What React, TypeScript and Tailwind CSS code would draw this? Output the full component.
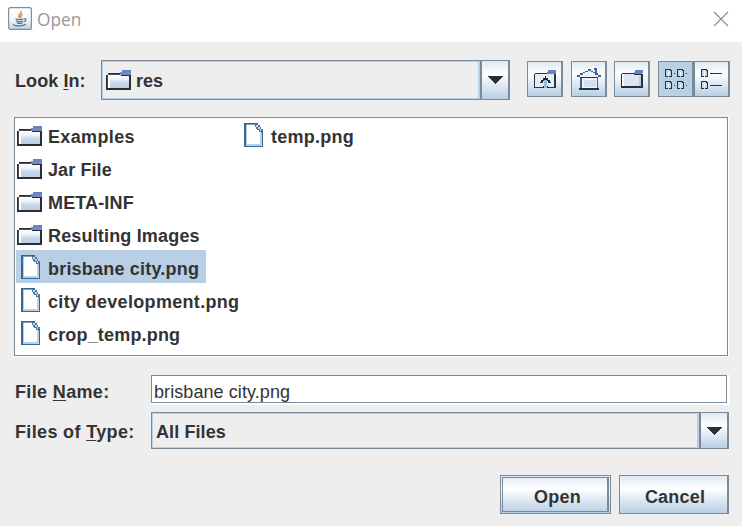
import React from "react";

const face = "bg-linear-to-b from-[#dfe9f3] via-white via-35% to-[#b8cfe5]";

function Folder() {
  return (
    <svg width="26" height="20" viewBox="0 0 26 20" shapeRendering="crispEdges" className="shrink-0">
      <defs>
        <linearGradient id="folderFill" x1="0" y1="0" x2="0" y2="1">
          <stop offset="0" stopColor="#ffffff" />
          <stop offset="0.35" stopColor="#f1f5fa" />
          <stop offset="0.6" stopColor="#c8daeb" />
          <stop offset="1" stopColor="#b8cfe5" />
        </linearGradient>
      </defs>
      <path d="M2 4H25V18H2Z" fill="url(#folderFill)" />
      <path d="M2 5H4V18H2Z" fill="#fff" />
      <path d="M2 3H15V4H2Z M0 5H1V20H0Z M0 18H25V20H0Z M23 5H25V20H23Z" fill="#2b2d33" />
      <path d="M2 4H15V5H2Z M1 5H2V18H1Z" fill="#4a4e57" />
      <path d="M16 0H25V3H16Z" fill="#6382bf" />
      <path d="M14 2H25V5H14Z" fill="#7189c0" />
      <path d="M15 5H23V6H15Z" fill="#2b2d33" />
    </svg>
  );
}

function Document() {
  return (
    <svg width="20" height="24" viewBox="0 0 20 24" shapeRendering="crispEdges" className="shrink-0">
      <path d="M1 1H12V4L15 7H18V23H1Z" fill="#fff" />
      <path d="M2 21H17V23H2Z M16 10H18V22H16Z M2 2H3V22H2Z" fill="#b8cfe5" />
      <path d="M0 0H14V1H0Z M0 0H2V24H0Z M0 23H19V24H0Z M18 8H19V24H18Z" fill="#366596" />
      <path d="M2 1H11V2H2Z" fill="#7f9fbe" />
      <path d="M11 1H14V2H16V4H17V6H19V10H17V9H15V7H13V6H12V4H11Z" fill="#4a779f" />
      <path d="M12 2H14V4H12Z M14 4H16V6H14Z M16 6H17V8H16Z" fill="#c3d9ec" />
    </svg>
  );
}

function Java() {
  return (
    <svg width="24" height="23" viewBox="0 0 24 23" fill="none" className="shrink-0">
      <defs>
        <linearGradient id="javaFill" x1="0" y1="0" x2="0" y2="1">
          <stop offset="0" stopColor="#fff" />
          <stop offset="0.55" stopColor="#f4f6f8" />
          <stop offset="1" stopColor="#c5d1dc" />
        </linearGradient>
      </defs>
      <rect x="0.6" y="0.6" width="22.8" height="21.8" rx="2" fill="url(#javaFill)" stroke="#7890a5" strokeWidth="1.2" />
      <path d="M13 4C14 7 8.8 7.2 11.6 11M14.5 7C11.7 8.2 13.7 9.3 12.3 11" stroke="#e38337" strokeWidth="1.4" />
      <path d="M7.5 12C8.5 13 14 12.7 15 12M8 14C10 15 13.5 14.7 15 14M9 16C11 16.8 13 16.5 14.5 16M15.5 12C19 11 18.5 14 15.5 15M5 17.3C7 19.5 15 19.2 18 17.3" stroke="#47799f" strokeWidth="1.2" />
    </svg>
  );
}

function UpFolder() {
  return (
    <svg width="22" height="18" viewBox="0 0 22 18" shapeRendering="crispEdges">
      <path d="M1 4H21V17H1Z" fill="#e6eef6" />
      <path d="M1 3H13V4H1Z M0 4H1V18H0Z M20 4H22V18H20Z M0 17H9V18H0Z M14 17H22V18H14Z" fill="#26354a" />
      <path d="M14 0H22V4H13V2H14Z" fill="#6382bf" />
      <path d="M10 9H13V18H10Z" fill="#9db9dc" />
      <path d="M11 6H12V8H14V10H16V12H17V13H14V11H13V16H14V18H13V10H10V18H9V16H10V11H9V13H6V12H7V10H9V8H11Z" fill="#202937" />
    </svg>
  );
}

function Home() {
  return (
    <svg width="24" height="22" viewBox="0 0 24 22" shapeRendering="crispEdges">
      <path d="M12 1L23 8H20V20H4V8H1Z" fill="#edf3f9" />
      <path
        d="M11 1H14V3H11Z M8 3H11V4H8Z M14 3H16V4H14Z M6 4H8V5H6Z M16 4H18V5H16Z M3 5H6V7H3Z M18 5H21V7H18Z M0 7H3V9H0Z M21 7H24V9H21Z M17 0H20V5H18V2H17Z M3 9H5V21H3Z M20 9H21V21H20Z"
        fill="#366596"
      />
      <path d="M3 9H21V10H3Z M2 20H22V22H2Z" fill="#1f334b" />
      <path d="M7 12H19V19H7Z" fill="#d5e0ec" />
    </svg>
  );
}

function NewFolder() {
  return (
    <svg width="22" height="18" viewBox="0 0 22 18" shapeRendering="crispEdges">
      <path d="M1 4H21V16H1Z" fill="#dce7f2" />
      <path d="M1 4H3V16H1Z" fill="#fff" />
      <path d="M18 6H20V16H18Z" fill="#b8cfe5" />
      <path d="M1 3H13V4H1Z M0 4H1V18H0Z M20 4H22V18H20Z M0 16H22V18H0Z M13 4H21V5H13Z" fill="#26303f" />
      <path d="M14 0H22V3H21V4H13V2H14Z" fill="#6382bf" />
    </svg>
  );
}

function Grid() {
  return (
    <svg width="22" height="20" viewBox="0 0 22 20" shapeRendering="crispEdges">
      {[0, 12].map((y) =>
        [0, 12].map((x) => (
          <g key={`${x}-${y}`} transform={`translate(${x} ${y})`}>
            <path d="M1 1H6V7H1Z" fill="#c3d6e9" />
            <path d="M0 0H6V1H1V7H3V8H0Z M5 1H7V8H4V7H6V2H5Z M9 4H10V5H9Z" fill="#263449" />
            <path d="M3 3H4V6H3Z" fill="#fff" />
          </g>
        ))
      )}
    </svg>
  );
}

function Details() {
  return (
    <svg width="21" height="20" viewBox="0 0 21 20" shapeRendering="crispEdges">
      {[0, 12].map((y) => (
        <g key={y} transform={`translate(0 ${y})`}>
          <path d="M1 1H6V7H1Z" fill="#c7d9eb" />
          <path d="M0 0H6V1H1V7H3V8H0Z M5 1H7V8H4V7H6V2H5Z M9 4H21V5H9Z" fill="#263449" />
          <path d="M3 2H4V6H3Z" fill="#fff" />
        </g>
      ))}
    </svg>
  );
}

function Tool({ children, className = "" }: { children: React.ReactNode; className?: string }) {
  return (
    <button className={`flex h-9 w-9 items-center justify-center border border-r-2 border-[#7a8a99] ${className || face}`}>
      {children}
    </button>
  );
}

function Combo({ children, className }: { children: React.ReactNode; className: string }) {
  return (
    <div className={`flex border border-[#7a8a99] ${className}`}>
      <div className="flex flex-1 items-center border border-r-2 border-[#b8cfe5]">{children}</div>
      <div className={`flex w-[29px] items-center justify-center border-r border-l-2 border-[#7a8a99] ${face}`}>
        <svg width="16" height="8" viewBox="0 0 16 8" shapeRendering="crispEdges">
          <path d="M0 0H16L8 8Z" fill="#2b2d30" />
        </svg>
      </div>
    </div>
  );
}

const files = [
  { name: "Examples", folder: true, spacing: "tracking-[0.36px]" },
  { name: "Jar File", folder: true, spacing: "tracking-[0.1px]" },
  { name: "META-INF", folder: true, spacing: "tracking-[0.14px]" },
  { name: "Resulting Images", folder: true, spacing: "tracking-[0.17px]" },
  { name: "brisbane city.png", selected: true, spacing: "tracking-[0.2px]" },
  { name: "city development.png", spacing: "tracking-[0.32px]" },
  { name: "crop_temp.png", spacing: "tracking-[0.17px]" },
  { name: "temp.png", spacing: "tracking-[0.26px]" },
];

export default function App() {
  return (
    <div className="flex h-[526px] w-[742px] flex-col bg-[#eeeeee] font-['Liberation_Sans',Arial,sans-serif] text-[18px] font-bold text-[#333333]">
      <header className="flex h-[42px] shrink-0 items-start bg-white pt-[7px] pr-[13px] pl-2">
        <Java />
        <span className="ml-[5px] font-['Open_Sans',sans-serif] text-[17.3px] leading-[26px] font-normal text-[#999999]">Open</span>
        <svg className="mt-[4px] ml-auto" width="16" height="16" viewBox="0 0 16 16" stroke="#909090" strokeWidth="1.3">
          <path d="M1 1L15 15M15 1L1 15" />
        </svg>
      </header>
      <div className="mt-[18px] flex h-10 shrink-0 pl-[15px]">
        <label className="w-[86px] pt-[2px] leading-[38px] tracking-[0.08px] whitespace-nowrap">Look <span className="underline underline-offset-2">I</span>n:</label>
        <Combo className="w-[409px]">
          <span className="ml-[3px] mr-[4px]"><Folder /></span>
          <span className="pt-[2px]">res</span>
        </Combo>
        <div className="mt-px ml-[17px] flex">
          <Tool><UpFolder /></Tool>
          <span className="w-2" />
          <Tool><Home /></Tool>
          <span className="w-[7px]" />
          <Tool><NewFolder /></Tool>
          <span className="w-2" />
          <Tool className="bg-[#b8cfe5]"><Grid /></Tool>
          <Tool><Details /></Tool>
        </div>
      </div>
      <div className="mt-[17px] ml-[14px] h-[240px] w-[715px] shrink-0 border-r border-b border-white">
        <div className="grid h-[239px] grid-flow-col grid-cols-[223px_1fr] grid-rows-[repeat(7,33px)] border border-[#7a8a99] bg-white pl-px">
          {files.map((file) => (
            <div key={file.name} className={`flex h-[33px] w-max items-center pr-[7px] whitespace-nowrap ${file.selected ? "bg-[#b8cfe5]" : ""}`}>
              <span className={`flex w-8 shrink-0 ${file.folder ? "pt-[2px] pl-px" : "pt-px pl-[5px]"}`}>
                {file.folder ? <Folder /> : <Document />}
              </span>
              <span className={`pt-[6px] ${file.spacing}`}>{file.name}</span>
            </div>
          ))}
        </div>
      </div>
      <div className="mt-[18px] flex h-[30px] shrink-0 pl-[15px]">
        <label className="w-[136px] pt-[2px] leading-[30px] tracking-[0.35px] whitespace-nowrap">File <span className="underline underline-offset-2">N</span>ame:</label>
        <div className="h-[30px] w-[579px] border-r-3 border-b-2 border-white">
          <div className="h-7 border border-[#7a8a99] bg-white pt-[4px] pl-[2px] leading-[24px] font-normal tracking-[0.08px]">brisbane city.png</div>
        </div>
      </div>
      <div className="mt-[7px] flex h-[37px] shrink-0 pl-[15px]">
        <label className="w-[136px] pt-[2px] leading-[36px] tracking-[0.35px] whitespace-nowrap">Files of <span className="underline underline-offset-2">T</span>ype:</label>
        <Combo className="w-[578px]"><span className="pt-[3px] pl-[3px] tracking-[0.1px]">All Files</span></Combo>
      </div>
      <div className="mt-[26px] mr-[13px] flex h-[39px] shrink-0 justify-end gap-2">
        <button className={`w-[111px] border border-[#7a8a99] p-px ${face}`}>
          <span className="flex h-full items-center justify-center border border-r-2 border-[#7a8a99] pt-[5px] pl-[5px] tracking-[0.2px]">Open</span>
        </button>
        <button className={`w-[110px] border border-r-2 border-[#7a8a99] pt-[5px] pl-[3px] tracking-[0.2px] ${face}`}>Cancel</button>
      </div>
    </div>
  );
}
